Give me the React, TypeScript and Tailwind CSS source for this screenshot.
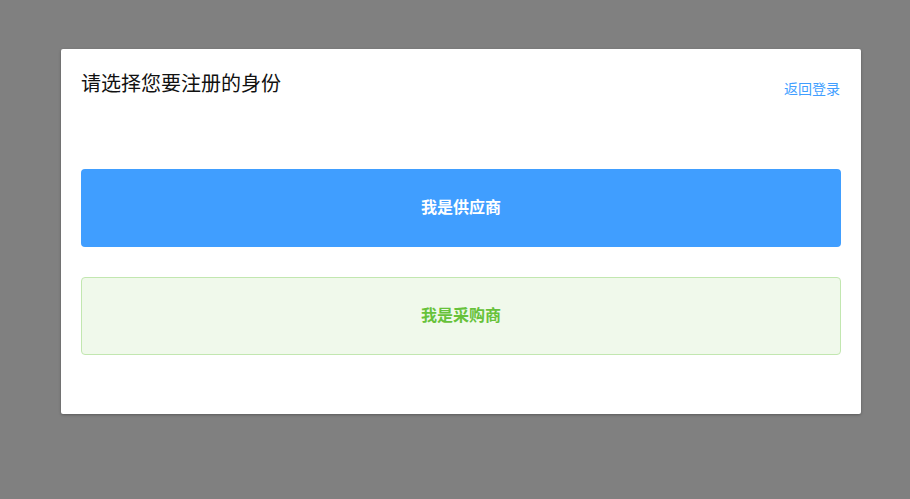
import React from "react";

const App = () => {
  return (
    <div
      className="w-[910px] h-[499px] bg-[#808080] pt-[49px] pl-[61px] overflow-hidden"
      style={{ fontFamily: '"Noto Sans CJK SC", "Noto Sans", sans-serif' }}
    >
      <div className="w-[800px] bg-white rounded-[2px] shadow-[0_1px_3px_rgba(0,0,0,0.3)] px-5 pt-5 pb-[59px]">
        <div className="flex justify-between items-end">
          <p className="text-[20px] leading-[28px] text-[#111]">请选择您要注册的身份</p>
          <a className="text-[14px] leading-[20px] text-[#409eff] cursor-pointer mr-px translate-y-px">返回登录</a>
        </div>

        <button className="mt-[72px] w-full h-[78px] pb-1 rounded bg-[#409eff] text-white text-[16px] font-bold flex items-center justify-center">
          我是供应商
        </button>
        <button className="mt-[30px] w-full h-[78px] pb-1 rounded border border-[#c2e7b0] bg-[#f0f9eb] text-[#67c23a] text-[16px] font-bold flex items-center justify-center">
          我是采购商
        </button>
      </div>
    </div>
  );
};

export default App;
